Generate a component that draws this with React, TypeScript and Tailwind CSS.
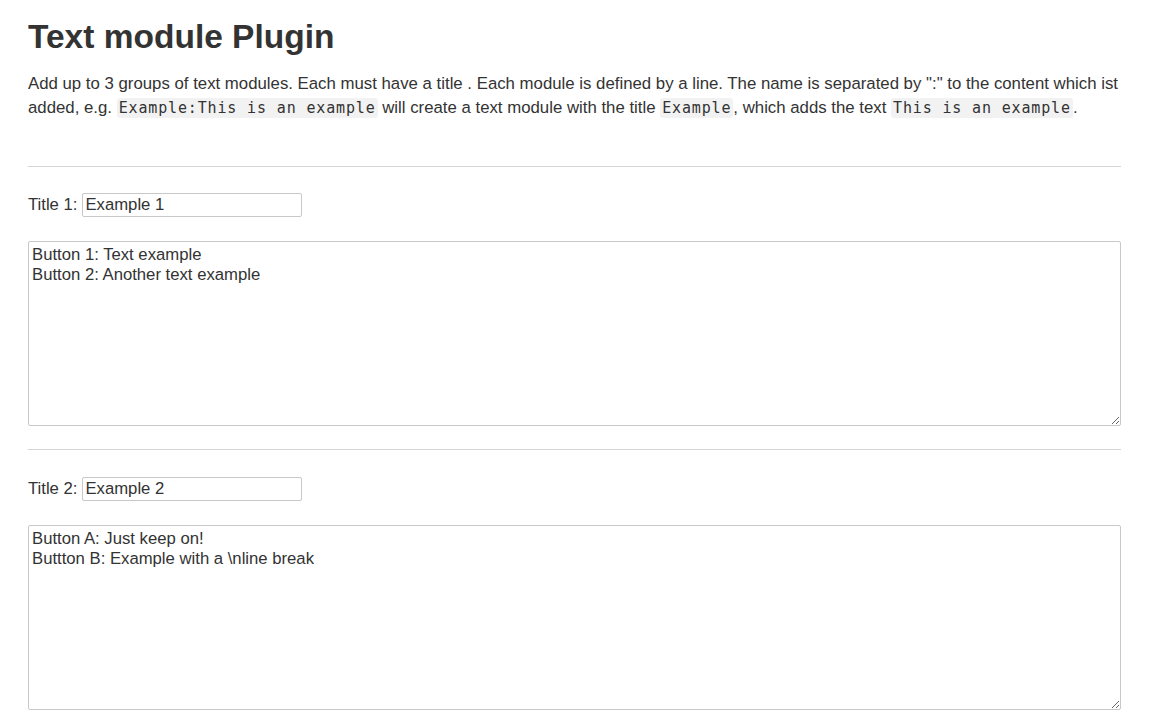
const font = { fontFamily: '"Liberation Sans", Arial, sans-serif' };

function Code({ children }: { children: string }) {
  return (
    <code className="rounded-[3px] bg-[#f2f2f2] px-[2px] py-[1px] font-['DejaVu_Sans_Mono',monospace] text-[15px] tracking-[0.85px] text-[#333]">
      {children}
    </code>
  );
}

function Group({ n, title, text, first }: { n: number; title: string; text: string; first?: boolean }) {
  return (
    <div>
      <div className={`${first ? "mt-[25px]" : "mt-[26px]"} flex items-center gap-[5px] text-[16.7px]`}>
        <span>Title {n}:</span>
        <input
          defaultValue={title}
          className="h-[24px] w-[220px] rounded-[2px] border border-[#c8c8c8] px-[2px] text-[16.7px] text-[#333] outline-none"
        />
      </div>
      <textarea
        defaultValue={text}
        className="mt-[24px] block h-[185px] w-full rounded-[2px] border border-[#c8c8c8] px-[3px] py-[3px] text-[16.7px] leading-[20px] text-[#333] outline-none"
      />
    </div>
  );
}

export default function App() {
  return (
    <div className="min-h-screen bg-white px-[28px] pb-[20px] text-[#333]" style={font}>
      <h1 className="pt-[17px] text-[33.5px] leading-[40px] font-bold">Text module Plugin</h1>
      <p className="mt-[15px] text-[16.8px] leading-[24px]">
        Add up to 3 groups of text modules. Each must have a title . Each module is defined by a line. The name is
        separated by ":" to the content which ist added, e.g. <Code>Example:This is an example</Code> will create a
        text module with the title <Code>Example</Code>, which adds the text <Code>This is an example</Code>.
      </p>
      <hr className="mt-[46px] border-t border-[#d4d4d4]" />
      <Group first n={1} title="Example 1" text={"Button 1: Text example\nButton 2: Another text example"} />
      <hr className="mt-[23px] border-t border-[#d4d4d4]" />
      <Group n={2} title="Example 2" text={"Button A: Just keep on!\nButtton B: Example with a \\nline break"} />
    </div>
  );
}
